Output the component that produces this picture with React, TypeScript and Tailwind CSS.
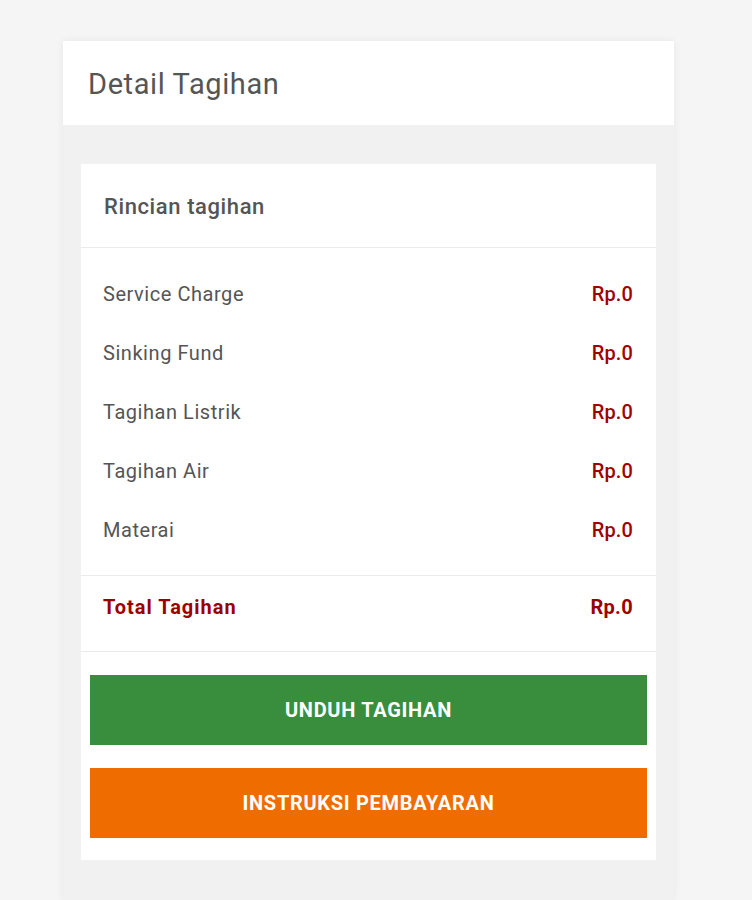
import React from "react";

const items = ["Service Charge", "Sinking Fund", "Tagihan Listrik", "Tagihan Air", "Materai"];

export default function App() {
  return (
    <div className="min-h-[900px] bg-[#f5f5f5] pt-[41px] pl-[63px]" style={{ fontFamily: "Roboto, 'Noto Sans', sans-serif" }}>
      <div className="w-[611px] min-h-[859px] bg-[#f1f1f1] shadow-[0_0_8px_rgba(0,0,0,0.06)]">
        <div className="h-[84px] bg-white flex items-center pl-[25px] pt-[2px]">
          <h1 className="text-[29px] tracking-[0.6px] text-[#555555] leading-none">Detail Tagihan</h1>
        </div>
        <div className="pt-[39px] px-[18px]">
          <div className="bg-white">
            <div className="h-[84px] flex items-center pl-[23px] pt-[2px] border-b border-[#ebebeb]">
              <h2 className="text-[22px] tracking-[0.6px] font-medium text-[#555555]">Rincian tagihan</h2>
            </div>
            <div className="py-4 border-b border-[#ebebeb]">
              {items.map((it) => (
                <div key={it} className="h-[59px] flex items-center justify-between pl-[22px] pr-[23px]">
                  <span className="text-[20px] tracking-[0.55px] text-[#555555]">{it}</span>
                  <span className="text-[20px] tracking-[0.1px] font-medium text-[#a00000]">Rp.0</span>
                </div>
              ))}
            </div>
            <div className="h-[76px] pt-[17px] pl-[22px] pr-[23px] flex justify-between items-start border-b border-[#ebebeb]">
              <span className="text-[20px] tracking-[1px] leading-7 font-bold text-[#9b0000]">Total Tagihan</span>
              <span className="text-[20px] tracking-[0.3px] leading-7 font-bold text-[#9b0000]">Rp.0</span>
            </div>
            <div className="pt-[23px] pb-[22px] px-[9px] flex flex-col gap-[23px]">
              <button className="h-[70px] w-full bg-[#388e3c] text-white text-[20px] tracking-[0.7px] font-bold uppercase">Unduh Tagihan</button>
              <button className="h-[70px] w-full bg-[#ef6c00] text-white text-[20px] tracking-[0.7px] font-bold uppercase">Instruksi Pembayaran</button>
            </div>
          </div>
        </div>
      </div>
    </div>
  );
}
